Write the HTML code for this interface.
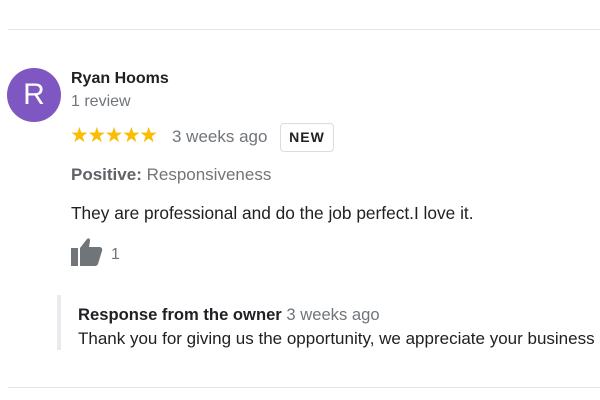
<!DOCTYPE html>
<html><head><style>
body{margin:0;width:600px;height:400px;background:#fff;font-family:"Liberation Sans",Arial,sans-serif;position:relative;overflow:hidden}
.a{position:absolute;white-space:nowrap}
</style></head><body>
<div class="a" style="left:8px;top:29px;width:592px;height:1px;background:#e4e4e4"></div>
<div class="a" style="left:7px;top:68px;width:54px;height:54px;border-radius:50%;background:#7e57c2;color:#fff;font-size:30px;line-height:54px;text-align:center">R</div>
<div class="a" style="left:71px;top:70px;font-size:16px;font-weight:bold;color:#202124">Ryan Hooms</div>
<div class="a" style="left:71px;top:93px;font-size:16px;color:#70757a">1 review</div>
<div class="a" style="left:70px;top:123px;font-size:21px;color:#fbbc04;letter-spacing:-1.5px">★★★★★</div>
<div class="a" style="left:172px;top:127px;font-size:17px;color:#70757a">3 weeks ago</div>
<div class="a" style="left:280px;top:123px;width:52px;height:27px;border:1px solid #dadce0;border-radius:4px;font-size:14px;font-weight:bold;line-height:27px;text-align:center;color:#202124;letter-spacing:1px">NEW</div>
<div class="a" style="left:71px;top:165px;font-size:17px;color:#70757a"><b style="color:#5f6368">Positive:</b> Responsiveness</div>
<div class="a" style="left:71px;top:203px;font-size:17.3px;color:#202124">They are professional and do the job perfect.I love it.</div>
<svg class="a" style="left:71px;top:237px" width="32" height="30" viewBox="0 0 32 30"><rect x="0" y="11" width="7" height="18" fill="#70757a"/><path d="M9 11 L16 2 Q19 0 19 4 L18 10 L29 10 Q32 11 31 14 L27 27 Q26 29 24 29 L9 29 Z" fill="#70757a"/></svg>
<div class="a" style="left:111px;top:246px;font-size:16px;color:#70757a">1</div>
<div class="a" style="left:57px;top:295px;width:4px;height:55px;background:#e8eaed"></div>
<div class="a" style="left:78px;top:305px;font-size:16.6px;color:#202124"><b>Response from the owner</b> <span style="color:#70757a">3 weeks ago</span></div>
<div class="a" style="left:78px;top:329px;font-size:17px;color:#202124">Thank you for giving us the opportunity, we appreciate your business</div>
<div class="a" style="left:8px;top:387px;width:592px;height:1px;background:#e4e4e4"></div>
</body></html>
